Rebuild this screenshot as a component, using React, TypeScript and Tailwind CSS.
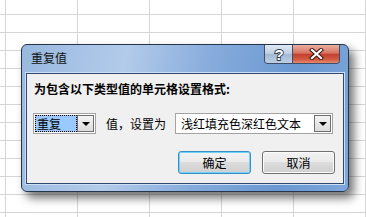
import React from "react";

const font = "font-['Noto_Sans_CJK_SC','Noto_Sans',sans-serif]";

function Arrow() {
  return <span className="h-0 w-0 border-x-[4px] border-t-[4px] border-x-transparent border-t-black" />;
}

function DropButton() {
  return (
    <div className="flex w-[17px] items-center justify-center border border-[#6f6f6f] bg-[linear-gradient(#f4f4f4,#dcdcdc)]">
      <Arrow />
    </div>
  );
}

function TitleButtons() {
  return (
    <div className="absolute right-[5px] top-0 flex h-[19px] overflow-hidden rounded-b-[4px] border border-t-0 border-[#3d4f66]">
      <div className="flex w-[28px] items-center justify-center border-r border-[#3d4f66] bg-[linear-gradient(#dfe8f4,#bccde2_50%,#a3b8d2_51%,#bccfe4)]">
        <svg width="12" height="15" viewBox="0 0 12 15">
          <text
            x="6"
            y="13"
            textAnchor="middle"
            fontSize="15"
            fontWeight="bold"
            fontFamily="Liberation Sans, sans-serif"
            fill="#fff"
            stroke="#2f3d52"
            strokeWidth="1.8"
            paintOrder="stroke"
          >
            ?
          </text>
        </svg>
      </div>
      <div className="flex w-[46px] items-center justify-center bg-[linear-gradient(#eab0a2,#d8735f_45%,#c2412f_52%,#d35a42_80%,#e8886e)]">
        <svg width="15" height="12" viewBox="0 0 15 12">
          <path d="M3 2 L12 10 M12 2 L3 10" stroke="#3b1a14" strokeWidth="4.2" strokeLinecap="square" />
          <path d="M3 2 L12 10 M12 2 L3 10" stroke="#fff" strokeWidth="2.2" strokeLinecap="square" />
        </svg>
      </div>
    </div>
  );
}

export default function App() {
  return (
    <div
      className={`relative h-[217px] w-[366px] overflow-hidden bg-white bg-[linear-gradient(to_right,#d5d5d5_1px,transparent_1px),linear-gradient(to_bottom,#d5d5d5_1px,transparent_1px)] bg-[size:72px_18px] bg-[position:5px_14px] ${font}`}
    >
      {/* 重复值 dialog */}
      <div className="absolute left-[21px] top-[44px] flex h-[148px] w-[328px] flex-col rounded-[6px] border border-[#26354a] bg-[linear-gradient(100deg,#98b8df_0%,#b3cbea_30%,#86abdb_55%,#6a98d2_80%,#7ea7da_100%)] px-[3px] shadow-[5px_6px_10px_rgba(0,0,0,0.55)]">
        <div className="relative h-[27px] shrink-0">
          <span className="absolute left-[6px] top-[5px] text-[12px] leading-[16px] text-[#111]">重复值</span>
          <TitleButtons />
        </div>
        <div className="border border-[#cddff4]">
          <div className="flex h-[111px] flex-col border border-[#2f4a70] bg-[#f0f0f0] px-[6px] text-[12px] text-black">
            <div className="mt-[7px] h-[16px] pl-[1px] font-bold leading-[16px]">为包含以下类型值的单元格设置格式:</div>
            <div className="mt-[16px] flex h-[21px] items-stretch">
              <div className="flex w-[63px] border border-[#a3a3a3] bg-white p-[1px]">
                <div className="flex flex-1 items-center border border-dotted border-black bg-[#99c9ff] pl-[1px] leading-none">
                  重复
                </div>
                <DropButton />
              </div>
              <span className="ml-[10px] flex items-center leading-none">值，设置为</span>
              <div className="ml-[9px] flex w-[158px] border border-[#a3a3a3] bg-white p-[1px]">
                <div className="flex flex-1 items-center pl-[4px] leading-none">浅红填充色深红色文本</div>
                <DropButton />
              </div>
            </div>
            <div className="mt-[17px] flex justify-end gap-[11px] pr-[2px]">
              <button className="flex h-[23px] w-[73px] items-center justify-center rounded-[3px] border border-[#3c8fc6] bg-[linear-gradient(#f2f2f2,#ebebeb_45%,#dcdcdc_50%,#cfcfcf)] shadow-[inset_0_0_0_1px_#6fd3f7]">
                确定
              </button>
              <button className="flex h-[23px] w-[73px] items-center justify-center rounded-[3px] border border-[#707070] bg-[linear-gradient(#f2f2f2,#ebebeb_45%,#dddddd_50%,#cfcfcf)] shadow-[inset_0_0_0_1px_#fcfcfc]">
                取消
              </button>
            </div>
          </div>
        </div>
      </div>
    </div>
  );
}
